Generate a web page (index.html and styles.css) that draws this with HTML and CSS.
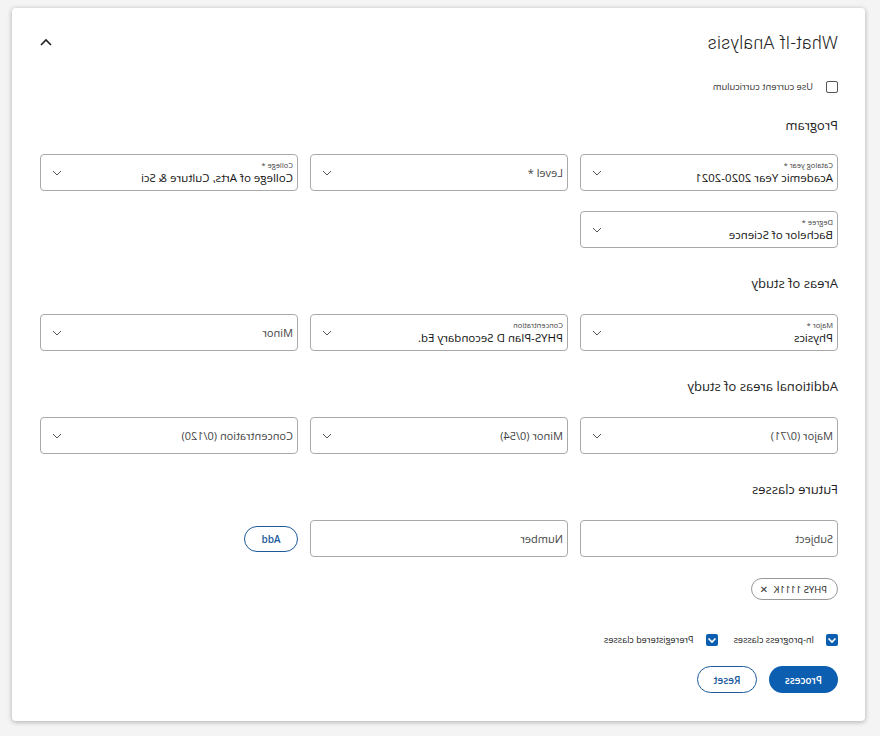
FILE: index.html
```html
<!DOCTYPE html>
<html>
<head>
<meta charset="utf-8">
<link rel="stylesheet" href="styles.css">
</head>
<body>
<div class="page">
  <div class="card">
    <div class="header">
      <h1 class="title">What-If Analysis</h1>
      <svg class="collapse" width="14" height="10" viewBox="0 0 14 10"><path d="M2 8 L7 3 L12 8" fill="none" stroke="#222" stroke-width="1.6"/></svg>
    </div>
    <label class="check-row top-check"><span class="box"></span><span class="check-label">Use current curriculum</span></label>

    <h2 class="section first">Program</h2>
    <div class="grid">
      <div class="select"><div class="sel-text"><span class="sel-label">Catalog year *</span><span class="sel-value">Academic Year 2020-2021</span></div><svg class="chev" width="10" height="6" viewBox="0 0 10 6"><path d="M1 1 L5 5 L9 1" fill="none" stroke="#555" stroke-width="1"/></svg></div>
      <div class="select"><div class="sel-text"><span class="sel-ph">Level *</span></div><svg class="chev" width="10" height="6" viewBox="0 0 10 6"><path d="M1 1 L5 5 L9 1" fill="none" stroke="#555" stroke-width="1"/></svg></div>
      <div class="select"><div class="sel-text"><span class="sel-label">College *</span><span class="sel-value">College of Arts, Culture &amp; Sci</span></div><svg class="chev" width="10" height="6" viewBox="0 0 10 6"><path d="M1 1 L5 5 L9 1" fill="none" stroke="#555" stroke-width="1"/></svg></div>
      <div class="select row2"><div class="sel-text"><span class="sel-label">Degree *</span><span class="sel-value">Bachelor of Science</span></div><svg class="chev" width="10" height="6" viewBox="0 0 10 6"><path d="M1 1 L5 5 L9 1" fill="none" stroke="#555" stroke-width="1"/></svg></div>
    </div>

    <h2 class="section">Areas of study</h2>
    <div class="grid">
      <div class="select"><div class="sel-text"><span class="sel-label">Major *</span><span class="sel-value">Physics</span></div><svg class="chev" width="10" height="6" viewBox="0 0 10 6"><path d="M1 1 L5 5 L9 1" fill="none" stroke="#555" stroke-width="1"/></svg></div>
      <div class="select"><div class="sel-text"><span class="sel-label">Concentration</span><span class="sel-value">PHYS-Plan D Secondary Ed.</span></div><svg class="chev" width="10" height="6" viewBox="0 0 10 6"><path d="M1 1 L5 5 L9 1" fill="none" stroke="#555" stroke-width="1"/></svg></div>
      <div class="select"><div class="sel-text"><span class="sel-ph">Minor</span></div><svg class="chev" width="10" height="6" viewBox="0 0 10 6"><path d="M1 1 L5 5 L9 1" fill="none" stroke="#555" stroke-width="1"/></svg></div>
    </div>

    <h2 class="section">Additional areas of study</h2>
    <div class="grid">
      <div class="select"><div class="sel-text"><span class="sel-ph">Major (0/71)</span></div><svg class="chev" width="10" height="6" viewBox="0 0 10 6"><path d="M1 1 L5 5 L9 1" fill="none" stroke="#555" stroke-width="1"/></svg></div>
      <div class="select"><div class="sel-text"><span class="sel-ph">Minor (0/54)</span></div><svg class="chev" width="10" height="6" viewBox="0 0 10 6"><path d="M1 1 L5 5 L9 1" fill="none" stroke="#555" stroke-width="1"/></svg></div>
      <div class="select"><div class="sel-text"><span class="sel-ph">Concentration (0/120)</span></div><svg class="chev" width="10" height="6" viewBox="0 0 10 6"><path d="M1 1 L5 5 L9 1" fill="none" stroke="#555" stroke-width="1"/></svg></div>
    </div>

    <h2 class="section">Future classes</h2>
    <div class="grid">
      <div class="select"><div class="sel-text"><span class="sel-ph">Subject</span></div></div>
      <div class="select"><div class="sel-text"><span class="sel-ph">Number</span></div></div>
      <div class="add-cell"><button class="btn-outline add">Add</button></div>
    </div>

    <div class="chips"><span class="chip">PHYS 1111K <span class="chip-x">✕</span></span></div>

    <div class="checks">
      <label class="check-row"><span class="box checked"><svg width="12" height="12" viewBox="0 0 12 12"><path d="M2.5 4.5 L6 8 L9.5 4.5" fill="none" stroke="#fff" stroke-width="1.6"/></svg></span><span class="check-label dark">In-progress classes</span></label>
      <label class="check-row"><span class="box checked"><svg width="12" height="12" viewBox="0 0 12 12"><path d="M2.5 4.5 L6 8 L9.5 4.5" fill="none" stroke="#fff" stroke-width="1.6"/></svg></span><span class="check-label dark">Preregistered classes</span></label>
    </div>

    <div class="actions">
      <button class="btn-primary">Process</button>
      <button class="btn-outline reset">Reset</button>
    </div>
  </div>
</div>
</body>
</html>
```
FILE: styles.css
```css
html, body {
  margin: 0;
  padding: 0;
  background: #f4f4f4;
}
.page {
  width: 880px;
  height: 736px;
  transform: scaleX(-1);
  font-family: "Open Sans", "Noto Sans", sans-serif;
  color: #222;
  padding-top: 8px;
  box-sizing: border-box;
}
.card {
  margin-left: 15px;
  width: 853px;
  height: 713px;
  box-sizing: border-box;
  background: #fff;
  border-radius: 4px;
  box-shadow: 0 1px 5px rgba(0,0,0,0.3);
  padding: 23px 26px 0 27px;
}
.header {
  display: flex;
  align-items: center;
  justify-content: space-between;
  height: 22px;
}
.title {
  margin: 0;
  font-family: Roboto, "Open Sans", sans-serif;
  font-weight: 300;
  font-size: 18px;
  color: #222;
  letter-spacing: 0.2px;
}
.collapse { margin-right: 1px; }
.check-row {
  display: flex;
  align-items: center;
  gap: 13px;
}
.top-check { margin-top: 27px; }
.box {
  width: 10px;
  height: 10px;
  border: 1px solid #555;
  border-radius: 2px;
  display: flex;
  align-items: center;
  justify-content: center;
}
.box.checked {
  width: 12px;
  height: 12px;
  border: none;
  background: #0b5eb0;
}
.check-label {
  font-size: 9.3px;
  color: #333;
}
.check-label.dark { color: #222; font-size: 9.1px; }
.section {
  margin: 27px 0 23px;
  font-size: 13px;
  font-weight: 400;
  color: #222;
  height: 16px;
  line-height: 16px;
}
.section.first { margin: 24px 0 21px; }
.grid {
  display: grid;
  grid-template-columns: repeat(3, 258px);
  column-gap: 12px;
  row-gap: 20px;
}
.select {
  height: 37px;
  box-sizing: border-box;
  border: 1px solid #aaa;
  border-radius: 4px;
  display: flex;
  align-items: center;
  justify-content: space-between;
  padding: 0 11px 0 4px;
}
.row2 { grid-column: 1; }
.sel-text {
  display: flex;
  flex-direction: column;
  padding-left: 0;
}
.sel-label {
  font-size: 7.5px;
  color: #444;
  line-height: 9px;
}
.sel-value {
  font-size: 11.5px;
  color: #111;
  line-height: 15px;
}
.sel-ph {
  font-size: 11px;
  color: #444;
}
.add-cell {
  display: flex;
  align-items: center;
}
.btn-outline {
  font-family: "Open Sans", sans-serif;
  background: #fff;
  border: 1px solid #1b5b9a;
  color: #1b5b9a;
  border-radius: 14px;
  cursor: pointer;
}
.add {
  width: 54px;
  height: 26px;
  font-size: 10px;
  font-weight: 600;
}
.chips { margin-top: 21px; display: flex; }
.chip {
  display: inline-flex;
  align-items: center;
  gap: 6px;
  height: 22px;
  box-sizing: border-box;
  padding: 0 8px 0 10px;
  border: 1px solid #999;
  border-radius: 11px;
  font-size: 9.5px;
  color: #222;
}
.chip-x { font-size: 10px; color: #333; }
.checks {
  display: flex;
  gap: 16px;
  margin-top: 33px;
}
.checks .check-row { gap: 12px; }
.actions {
  display: flex;
  gap: 12px;
  margin-top: 20px;
}
.btn-primary {
  font-family: "Open Sans", sans-serif;
  width: 69px;
  height: 27px;
  border: none;
  border-radius: 14px;
  background: #0b5eb0;
  color: #fff;
  font-size: 10px;
  font-weight: 600;
}
.reset {
  width: 60px;
  height: 27px;
  font-size: 10px;
  font-weight: 600;
}
```
